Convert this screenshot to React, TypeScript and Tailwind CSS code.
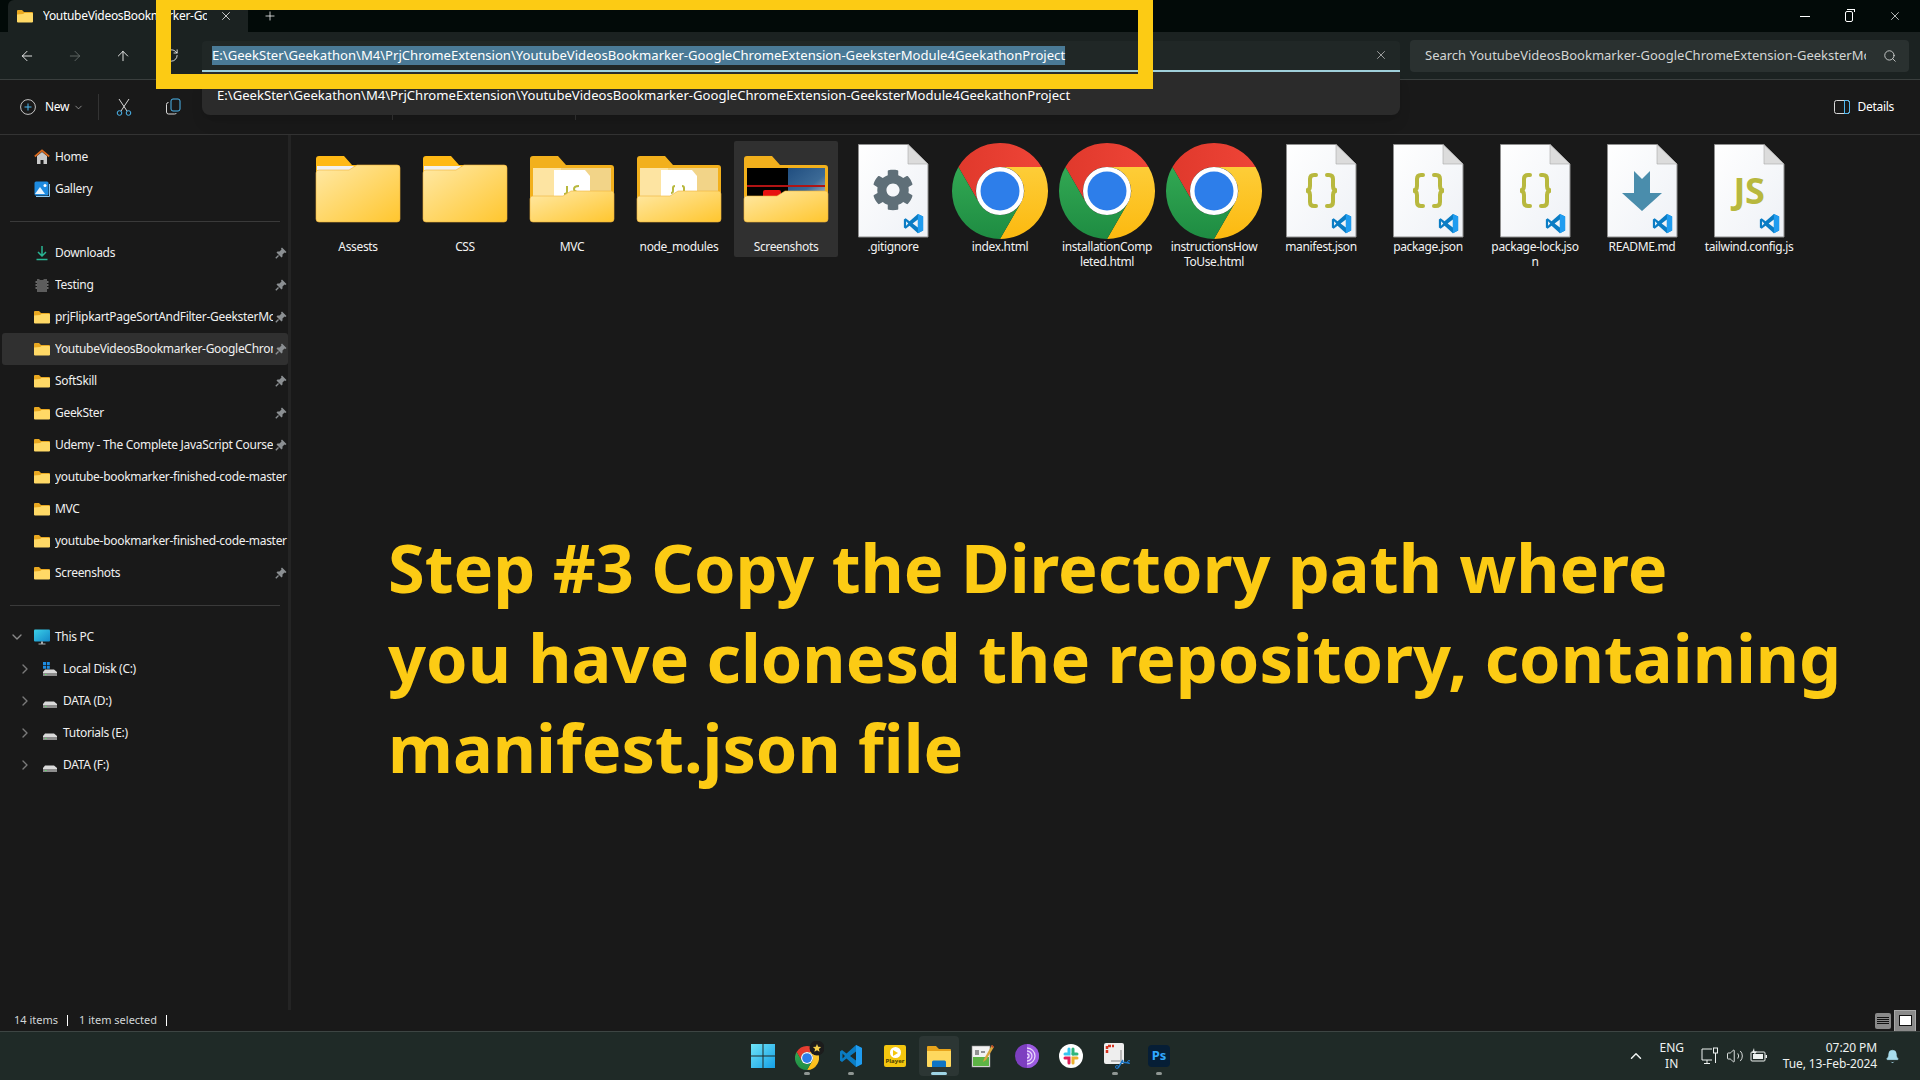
import React from "react";
import {
  ArrowLeft,
  ArrowRight,
  ArrowUp,
  Bell,
  ChevronDown,
  ChevronRight,
  ChevronUp,
  Plus,
  RotateCw,
  Search,
  Volume2,
  X,
} from "lucide-react";
import { FaCog } from "react-icons/fa";

const PATH =
  "E:\\GeekSter\\Geekathon\\M4\\PrjChromeExtension\\YoutubeVideosBookmarker-GoogleChromeExtension-GeeksterModule4GeekathonProject";

/* small icons */
function SmallFolder() {
  return (
    <svg width="16" height="14" viewBox="0 0 16 14" className="shrink-0">
      <path d="M0 2a1 1 0 0 1 1-1h4l2 2h8a1 1 0 0 1 1 1v8a1 1 0 0 1-1 1H1a1 1 0 0 1-1-1z" fill="#e9a820" />
      <path d="M0 5.500 6 5l1.500-1H15a1 1 0 0 1 1 1v7.500a1 1 0 0 1-1 1H1a1 1 0 0 1-1-1z" fill="#ffd966" />
    </svg>
  );
}

function Pin() {
  return (
    <svg width="12" height="12" viewBox="0 0 12 12" className="shrink-0">
      <path d="M7 0.500 11.500 5 10.500 6 9.500 5.500 7.500 7.500 7.500 9.500 6.500 10.500 1.500 5.500 2.500 4.500 4.500 4.500 6.500 2.500 6 1.500z" fill="#8b8f92" />
      <path d="M3.500 8.500 0.800 11.200" stroke="#8b8f92" strokeWidth="1.300" />
    </svg>
  );
}

function HomeIcon() {
  return (
    <svg width="16" height="16" viewBox="0 0 16 16" className="shrink-0">
      <path d="M3 7 8 3l5 4v8H9.500v-4h-3v4H3z" fill="#c9c9c9" />
      <path d="M0.800 7.500 8 1.300l7.200 6.200" fill="none" stroke="#d9691e" strokeWidth="1.700" />
    </svg>
  );
}

function GalleryIcon() {
  return (
    <svg width="16" height="16" viewBox="0 0 16 16" className="shrink-0">
      <rect x="0.500" y="0.500" width="14" height="14" rx="1.500" fill="#1e8be0" />
      <circle cx="11" cy="4.500" r="1.500" fill="#fff" />
      <path d="M1 13 6 6l5 7z" fill="#e8f4fc" />
      <path d="M2 15.500h13.500V3" fill="none" stroke="#8cc8f0" strokeWidth="1" />
    </svg>
  );
}

function DownloadIcon() {
  return (
    <svg width="16" height="16" viewBox="0 0 16 16" className="shrink-0">
      <path d="M8 1v9.500M4 7l4 4 4-4" fill="none" stroke="#2ab594" strokeWidth="1.500" />
      <path d="M2.500 14.500h11" stroke="#2ab594" strokeWidth="1.500" />
    </svg>
  );
}

function ChipIcon() {
  return (
    <svg width="16" height="16" viewBox="0 0 16 16" className="shrink-0">
      <path d="M3 2h2.500v1h4V2H13v13H3z" fill="#5d5d5d" />
      <path d="M1.500 5H3M1.500 8H3M1.500 11H3M13 5h1.500M13 8h1.500M13 11h1.500" stroke="#b9b9b9" strokeWidth="1.200" />
    </svg>
  );
}

function MonitorIcon() {
  return (
    <svg width="16" height="16" viewBox="0 0 16 16" className="shrink-0">
      <defs>
        <linearGradient id="pc" x1="0" y1="0" x2="1" y2="1">
          <stop offset="0" stopColor="#3bd0e8" />
          <stop offset="1" stopColor="#1488c8" />
        </linearGradient>
      </defs>
      <rect x="0" y="0.500" width="16" height="12" rx="1" fill="url(#pc)" />
      <path d="M7 12.500h2v2H7zM4.500 14.500h7v1h-7z" fill="#a8adb0" />
    </svg>
  );
}

function DiskIcon({ windows }: { windows?: boolean }) {
  return (
    <svg width="16" height="16" viewBox="0 0 16 16" className="shrink-0">
      {windows && <path d="M1 1h3v3H1zM4.800 1h3v3h-3zM1 4.800h3v3H1zM4.800 4.800h3v3h-3z" fill="#1e8be0" />}
      <path d="M3 8.500h9L15 11v1H1v-1z" fill="#d9d9d9" />
      <rect x="1" y="12" width="14" height="3" fill="#8d8d8d" />
      <rect x="3" y="13" width="1.500" height="1" fill="#5fe06a" />
    </svg>
  );
}

/* file list icons, all on a 96 box */
function VsBadge({ x, y, size }: { x: number; y: number; size: number }) {
  return (
    <svg x={x} y={y} width={size} height={size} viewBox="0 0 24 24">
      <path
        fillRule="evenodd"
        d="M17 1 23 4V20L17 23 7.500 14.500 3 18 1 16.500V7.500L3 6 7.500 9.500ZM17 7.500 11 12 17 16.500ZM3.500 9.500V14.500L6 12Z"
        fill="#0a7cc4"
      />
      <path fillRule="evenodd" d="M17 1 23 4V20L17 23V16.500 7.500Z" fill="#1f9cf0" />
    </svg>
  );
}

function ChromeShape() {
  return (
    <>
      <defs>
        <linearGradient id="cr" x1="0" y1="0" x2="1" y2="0">
          <stop offset="0" stopColor="#e0392c" />
          <stop offset="1" stopColor="#ee4437" />
        </linearGradient>
        <linearGradient id="cy" x1="0" y1="0" x2="0" y2="1">
          <stop offset="0" stopColor="#fdcd38" />
          <stop offset="1" stopColor="#fcb90f" />
        </linearGradient>
        <linearGradient id="cg" x1="0" y1="0" x2="0" y2="1">
          <stop offset="0" stopColor="#32a853" />
          <stop offset="1" stopColor="#1e8c42" />
        </linearGradient>
      </defs>
      <path d="M48 0A48 48 0 0 1 89.570 24H48A24 24 0 0 0 27.200 60L6.430 24A48 48 0 0 1 48 0Z" fill="url(#cr)" />
      <path d="M89.570 24A48 48 0 0 1 48 96L68.800 60A24 24 0 0 0 48 24Z" fill="url(#cy)" />
      <path d="M6.430 24A48 48 0 0 0 48 96L68.800 60A24 24 0 0 1 27.200 60Z" fill="url(#cg)" />
      <circle cx="48" cy="48" r="24" fill="#fff" />
      <circle cx="48" cy="48" r="19.500" fill="#2d7eea" />
    </>
  );
}

function ChromeIcon() {
  return (
    <svg width="96" height="96" viewBox="0 0 96 96">
      <ChromeShape />
    </svg>
  );
}

function Doc({ children }: { children?: React.ReactNode }) {
  return (
    <svg width="96" height="96" viewBox="0 0 96 96">
      <defs>
        <linearGradient id="pg" x1="0" y1="0" x2="1" y2="1">
          <stop offset="0" stopColor="#ffffff" />
          <stop offset="1" stopColor="#eef1f6" />
        </linearGradient>
      </defs>
      <path d="M13.500 1.500H63L83 21V94H13.500Z" fill="url(#pg)" stroke="#8f8f8f" strokeWidth="1" />
      <path d="M63 1.500V21H83Z" fill="#dcdcdc" stroke="#a8a8a8" strokeWidth="0.600" />
      {children}
      <VsBadge x={58} y={70} size={21} />
    </svg>
  );
}

function Braces() {
  return (
    <g fill="none" stroke="#b8b83e" strokeWidth="4" strokeLinecap="round">
      <path d="M43 32h-2q-4 0-4 4v7q0 4.500-4 4.500 4 0 4 4.500v7q0 4 4 4h2" />
      <path d="M54 32h2q4 0 4 4v7q0 4.500 4 4.500-4 0-4 4.500v7q0 4-4 4h-2" />
    </g>
  );
}

function Folder({ content }: { content?: "js" | "json" | "shots" }) {
  if (!content) {
    return (
      <svg width="96" height="96" viewBox="0 0 96 96" className="ml-[2px]">
        <defs>
          <linearGradient id="ff" x1="0" y1="0" x2="1" y2="1">
            <stop offset="0" stopColor="#ffe9a6" />
            <stop offset="1" stopColor="#ffc62e" />
          </linearGradient>
        </defs>
        <path d="M5 16a3 3 0 0 1 3-3h25l8 9h45a3 3 0 0 1 3 3v20H5z" fill="#ffb915" />
        <path d="M6 23H42L46 25 40 29H6z" fill="#f1f1f1" />
        <path d="M5 30a3 3 0 0 1 3-3H38L46 22H86a3 3 0 0 1 3 3V76a3 3 0 0 1-3 3H8a3 3 0 0 1-3-3Z" fill="url(#ff)" stroke="#eeb23a" strokeWidth="0.600" />
      </svg>
    );
  }
  return (
    <svg width="96" height="96" viewBox="0 0 96 96" className="ml-[2px]">
      <defs>
        <linearGradient id="ff2" x1="0" y1="0" x2="1" y2="1">
          <stop offset="0" stopColor="#ffe9a6" />
          <stop offset="1" stopColor="#ffc62e" />
        </linearGradient>
        <linearGradient id="sky" x1="0" y1="0" x2="1" y2="1">
          <stop offset="0" stopColor="#204e80" />
          <stop offset="0.600" stopColor="#3c6a96" />
          <stop offset="1" stopColor="#b0b4c0" />
        </linearGradient>
      </defs>
      <path d="M5 16a3 3 0 0 1 3-3h25l8 9h45a3 3 0 0 1 3 3v40H5z" fill="#f2b01c" />
      {content === "shots" ? (
        <>
          <rect x="8" y="25" width="41" height="30" fill="#000" />
          <rect x="49" y="25" width="37" height="30" fill="url(#sky)" />
          <rect x="8" y="42" width="78" height="2" fill="#b01414" />
          <rect x="24" y="47" width="18" height="10" rx="2" fill="#e81010" />
        </>
      ) : (
        <>
          <rect x="8" y="25" width="78" height="30" fill="#f2d488" />
          <rect x="8" y="25" width="28" height="30" fill="#fde4a2" />
          <path d="M29 27H60L65 33V56H29Z" fill="#fff" />
          {content === "js" ? (
            <path d="M42 43v6q0 2-3 2M54 43q-5 0-5 3t5 3-4 3" fill="none" stroke="#b8b83e" strokeWidth="2" />
          ) : (
            <path d="M43 43q-2 0-2 2v3q0 2-2 2M50 43q2 0 2 2v3q0 2 2 2" fill="none" stroke="#b8b83e" strokeWidth="2" />
          )}
        </>
      )}
      <path d="M5 56a3 3 0 0 1 3-3H38L46 48H86a3 3 0 0 1 3 3V76a3 3 0 0 1-3 3H8a3 3 0 0 1-3-3Z" fill="url(#ff2)" stroke="#eeb23a" strokeWidth="0.600" />
    </svg>
  );
}

const ITEMS: { name: string[]; icon: React.ReactNode; selected?: boolean }[] = [
  { name: ["Assests"], icon: <Folder /> },
  { name: ["CSS"], icon: <Folder /> },
  { name: ["MVC"], icon: <Folder content="js" /> },
  { name: ["node_modules"], icon: <Folder content="json" /> },
  { name: ["Screenshots"], icon: <Folder content="shots" />, selected: true },
  {
    name: [".gitignore"],
    icon: (
      <Doc>
        <foreignObject x="27" y="26" width="42" height="42">
          <FaCog className="w-[42px] h-[42px] text-[#5f6f78]" />
        </foreignObject>
      </Doc>
    ),
  },
  { name: ["index.html"], icon: <ChromeIcon /> },
  { name: ["installationComp", "leted.html"], icon: <ChromeIcon /> },
  { name: ["instructionsHow", "ToUse.html"], icon: <ChromeIcon /> },
  { name: ["manifest.json"], icon: <Doc><Braces /></Doc> },
  { name: ["package.json"], icon: <Doc><Braces /></Doc> },
  { name: ["package-lock.jso", "n"], icon: <Doc><Braces /></Doc> },
  {
    name: ["README.md"],
    icon: (
      <Doc>
        <path d="M40 28 48 36 56 28V50H68L48 68 28 50H40Z" fill="#4a8dac" />
      </Doc>
    ),
  },
  {
    name: ["tailwind.config.js"],
    icon: (
      <Doc>
        <text x="48" y="61" textAnchor="middle" fontSize="36" fontWeight="700" fill="#b8b83e" fontFamily="Open Sans, sans-serif">
          JS
        </text>
      </Doc>
    ),
  },
];

const QUICK: { label: string; icon: React.ReactNode; pinned?: boolean; active?: boolean }[] = [
  { label: "Downloads", icon: <DownloadIcon />, pinned: true },
  { label: "Testing", icon: <ChipIcon />, pinned: true },
  { label: "prjFlipkartPageSortAndFilter-GeeksterModule", icon: <SmallFolder />, pinned: true },
  { label: "YoutubeVideosBookmarker-GoogleChromeExtension", icon: <SmallFolder />, pinned: true, active: true },
  { label: "SoftSkill", icon: <SmallFolder />, pinned: true },
  { label: "GeekSter", icon: <SmallFolder />, pinned: true },
  { label: "Udemy - The Complete JavaScript Course", icon: <SmallFolder />, pinned: true },
  { label: "youtube-bookmarker-finished-code-master", icon: <SmallFolder /> },
  { label: "MVC", icon: <SmallFolder /> },
  { label: "youtube-bookmarker-finished-code-master", icon: <SmallFolder /> },
  { label: "Screenshots", icon: <SmallFolder />, pinned: true },
];

function NavRow({ label, icon, pinned, active }: { label: string; icon: React.ReactNode; pinned?: boolean; active?: boolean }) {
  return (
    <div className={`h-8 flex items-center pl-[32px] ml-[2px] rounded-[3px] ${active ? "bg-[#303030]" : ""}`}>
      <div className="w-[21px] shrink-0">{icon}</div>
      <span className={`overflow-hidden whitespace-nowrap ${pinned ? "w-[218px]" : "w-[233px]"}`}>{label}</span>
      {pinned && <div className="ml-[2px]"><Pin /></div>}
    </div>
  );
}

function DriveRow({ label, windows }: { label: string; windows?: boolean }) {
  return (
    <div className="h-8 flex items-center pl-[17px]">
      <ChevronRight size={16} strokeWidth={2} className="text-[#7a7a7a] mr-[9px] shrink-0" />
      <div className="w-[21px] shrink-0"><DiskIcon windows={windows} /></div>
      <span>{label}</span>
    </div>
  );
}

function Sidebar() {
  return (
    <aside className="w-[291px] shrink-0 border-r-[3px] border-[#242424] pt-[6px] text-[12px] tracking-[-0.3px] text-[#f0f0f0]">
      <NavRow label="Home" icon={<HomeIcon />} />
      <NavRow label="Gallery" icon={<GalleryIcon />} />
      <div className="h-px bg-[#3a3a3a] mt-4 mb-[15px] mx-[10px] w-[270px]" />
      {QUICK.map((q, i) => (
        <NavRow key={i} {...q} />
      ))}
      <div className="h-px bg-[#3a3a3a] mt-4 mb-[15px] mx-[10px] w-[270px]" />
      <div className="h-8 flex items-center pl-[9px]">
        <ChevronDown size={16} strokeWidth={2} className="text-[#8a8a8a] mr-[9px] shrink-0" />
        <div className="w-[21px] shrink-0"><MonitorIcon /></div>
        <span>This PC</span>
      </div>
      <DriveRow label="Local Disk (C:)" windows />
      <DriveRow label="DATA (D:)" />
      <DriveRow label="Tutorials (E:)" />
      <DriveRow label="DATA (F:)" />
    </aside>
  );
}

function FileGrid() {
  return (
    <main className="flex-1 pl-[15px] pt-[6px]">
      <div className="flex gap-[3px] text-[12px] leading-[15px] tracking-[-0.35px] text-[#f2f2f2]">
        {ITEMS.map((item) => (
          <div
            key={item.name.join("")}
            className={`w-[104px] h-[116px] flex flex-col items-center rounded-[2px] ${item.selected ? "bg-[#303030]" : ""}`}
          >
            <div className="h-[98px] pt-[2px] shrink-0">{item.icon}</div>
            {item.name.map((line) => (
              <div key={line} className="text-center whitespace-nowrap">{line}</div>
            ))}
          </div>
        ))}
      </div>
    </main>
  );
}

/* taskbar icons */
function TaskIcon({ children, running, active }: { children: React.ReactNode; running?: boolean; active?: boolean }) {
  return (
    <div className={`relative w-10 h-10 flex items-center justify-center rounded-[4px] ${active ? "bg-[#2c3634]" : ""}`}>
      {children}
      {running && <div className={`absolute bottom-[1px] left-1/2 -translate-x-1/2 h-[3px] rounded-full ${active ? "w-4 bg-[#9fd4e4]" : "w-[6px] bg-[#8f9693]"}`} />}
    </div>
  );
}

function TaskbarIcons() {
  return (
    <div className="flex items-center gap-[4px] pl-[2px]">
      <TaskIcon>
        <svg width="24" height="24" viewBox="0 0 24 24">
          <defs>
            <linearGradient id="win" x1="0" y1="0" x2="1" y2="1">
              <stop offset="0" stopColor="#6fe4f7" />
              <stop offset="1" stopColor="#149fe6" />
            </linearGradient>
          </defs>
          <path d="M0 0h11.500v11.500H0zM12.500 0H24v11.500H12.500zM0 12.500h11.500V24H0zM12.500 12.500H24V24H12.500z" fill="url(#win)" />
        </svg>
      </TaskIcon>
      <TaskIcon running>
        <svg width="30" height="30" viewBox="0 0 30 30" className="ml-[3px]">
          <svg x="1" y="5" width="24" height="24" viewBox="0 0 96 96">
            <ChromeShape />
          </svg>
          <circle cx="23" cy="7" r="7.500" fill="#1c1c1c" />
          <path d="M23 3l1.200 2.700 2.900.3-2.200 1.900.7 2.900-2.600-1.500-2.600 1.500.7-2.900-2.200-1.900 2.900-.3z" fill="#f5cf4a" />
        </svg>
      </TaskIcon>
      <TaskIcon running>
        <svg width="24" height="24" viewBox="0 0 24 24">
          <VsBadge x={0} y={0} size={24} />
        </svg>
      </TaskIcon>
      <TaskIcon>
        <div className="w-[22px] h-[22px] bg-[#f4c60f] rounded-[2px] flex flex-col items-center pt-[2px]">
          <div className="w-[11px] h-[11px] rounded-full bg-white flex items-center justify-center">
            <div className="w-0 h-0 border-y-[3px] border-y-transparent border-l-[5px] border-l-[#f4c60f]" />
          </div>
          <span className="text-[6px] leading-[7px] font-bold text-[#4a3c00]">Player</span>
        </div>
      </TaskIcon>
      <TaskIcon running active>
        <svg width="24" height="22" viewBox="0 0 24 22">
          <path d="M0 2a1 1 0 0 1 1-1h8l3 3h11a1 1 0 0 1 1 1v4H0z" fill="#e8a41c" />
          <path d="M0 6h24v15a1 1 0 0 1-1 1H1a1 1 0 0 1-1-1z" fill="#fed85e" />
          <path d="M5 17a1.500 1.500 0 0 1 1.500-1.500h11A1.500 1.500 0 0 1 19 17v5H5z" fill="#0f74c4" />
        </svg>
      </TaskIcon>
      <TaskIcon>
        <svg width="24" height="24" viewBox="0 0 24 24">
          <rect x="1" y="2" width="18" height="21" fill="#f2f2f2" stroke="#888" strokeWidth="0.600" />
          <rect x="2" y="13" width="16" height="9" fill="#5db345" />
          <path d="M5 6v5M7 6v5M10 8h4" stroke="#333" strokeWidth="1" />
          <path d="M21 1 13 15l-1 3 3-2L23 3z" fill="#d9a53c" />
          <path d="M21 1l2 2-1 1-2-2z" fill="#c2402b" />
        </svg>
      </TaskIcon>
      <TaskIcon>
        <svg width="24" height="24" viewBox="0 0 24 24">
          <circle cx="12" cy="12" r="12" fill="#7d3fc0" />
          <path d="M12 0a12 12 0 0 1 0 24z" fill="#9c5be0" />
          <g fill="none" stroke="#e8d6fa" strokeWidth="1.300">
            <path d="M12 4a8 8 0 0 1 0 16" />
            <path d="M12 7a5 5 0 0 1 0 10" />
            <path d="M12 10a2 2 0 0 1 0 4" />
          </g>
        </svg>
      </TaskIcon>
      <TaskIcon>
        <svg width="24" height="24" viewBox="0 0 24 24">
          <circle cx="12" cy="12" r="12" fill="#fff" />
          <g strokeWidth="3" strokeLinecap="round">
            <path d="M10 5v5H6" stroke="#36c5f0" fill="none" />
            <path d="M14 5v5" stroke="#2eb67d" />
            <path d="M14 10h4" stroke="#2eb67d" />
            <path d="M14 19v-5h4" stroke="#ecb22e" fill="none" />
            <path d="M10 19v-5H6" stroke="#e01e5a" fill="none" />
          </g>
        </svg>
      </TaskIcon>
      <TaskIcon running>
        <svg width="26" height="26" viewBox="0 0 26 26" className="ml-[3px]">
          <rect x="0" y="0" width="20" height="21" rx="2" fill="#eeeeee" />
          <path d="M3 10V3h7" fill="none" stroke="#d6331f" strokeWidth="2.500" strokeDasharray="3 1" />
          <path d="M17 7v11H7" fill="none" stroke="#b9b9b9" strokeWidth="2" />
          <path d="M14 25 19 17M25 20l-8-1" stroke="#1f78c8" strokeWidth="1.500" />
          <circle cx="13" cy="24" r="1.500" fill="none" stroke="#1f78c8" />
          <circle cx="25" cy="19" r="1.500" fill="none" stroke="#1f78c8" />
        </svg>
      </TaskIcon>
      <TaskIcon running>
        <div className="w-[22px] h-[22px] rounded-[4px] bg-[#061e36] flex items-center justify-center text-[#31a8ff] text-[13px] font-bold">Ps</div>
      </TaskIcon>
    </div>
  );
}

function Tray() {
  return (
    <div className="flex items-center justify-end text-[#eef2f1]">
      <ChevronUp size={18} strokeWidth={2} className="mr-[12px]" />
      <div className="text-[12px] leading-[16px] text-center w-[30px] mr-[14px]">
        <div>ENG</div>
        <div>IN</div>
      </div>
      <svg width="18" height="18" viewBox="0 0 18 18" fill="none" stroke="#eef2f1" strokeWidth="1" className="mr-[7px]">
        <path d="M11 13H1V2h10M6 13v3M3 16.500h6" />
        <rect x="12.500" y="1" width="4" height="5" />
        <path d="M14.500 6v10" />
      </svg>
      <Volume2 size={18} strokeWidth={1.200} className="mr-[6px]" />
      <svg width="18" height="18" viewBox="0 0 18 18" className="mr-[15px]">
        <rect x="1" y="5" width="14" height="9" rx="1" fill="none" stroke="#eef2f1" />
        <rect x="3" y="7" width="10" height="5" fill="#eef2f1" />
        <rect x="15.500" y="8" width="1.500" height="3" fill="#eef2f1" />
        <path d="M4 1 2 6h2.500l-1 3L7 4.500H4.500z" fill="#eef2f1" />
      </svg>
      <div className="text-[12px] tracking-[-0.1px] leading-[16px] text-right mr-[8px]">
        <div>07:20 PM</div>
        <div>Tue, 13-Feb-2024</div>
      </div>
      <Bell size={15} strokeWidth={1} fill="#a8dcec" className="text-[#a8dcec] mr-[20px]" />
    </div>
  );
}

export default function App() {
  return (
    <div className="relative w-screen h-screen overflow-hidden flex flex-col bg-[#191919] text-white font-['Noto_Sans',sans-serif]">
      {/* Title bar */}
      <div className="h-8 shrink-0 bg-[#020a08] flex items-end">
        <div className="ml-2 w-[240px] h-8 rounded-t-[6px] bg-[#1b2221] flex items-center pl-[9px]">
          <SmallFolder />
          <span className="ml-[10px] w-[164px] overflow-hidden whitespace-nowrap text-[12px] tracking-[-0.3px]">YoutubeVideosBookmarker-GoogleChrome</span>
          <X size={14} strokeWidth={1.300} className="ml-[12px]" />
        </div>
        <Plus size={14} strokeWidth={1.300} className="ml-[15px] mb-[9px]" />
        <div className="ml-auto h-full flex items-center pr-[18px] gap-[35px]">
          <div className="w-[10px] h-px bg-white" />
          <div className="relative w-[8px] h-[11px] border border-white rounded-[2px] after:absolute after:left-[1px] after:-top-[3px] after:w-[8px] after:h-[3px] after:border-t after:border-r after:border-white" />
          <X size={14} strokeWidth={1.200} />
        </div>
      </div>

      {/* Address row */}
      <div className="h-[48px] shrink-0 bg-[#1b2221] border-b border-[#3a3f3e] flex items-center pl-[3px] pr-[11px]">
        <div className="w-12 flex justify-center"><ArrowLeft size={16} strokeWidth={1.300} /></div>
        <div className="w-12 flex justify-center"><ArrowRight size={16} strokeWidth={1.300} className="text-[#6a706e]" /></div>
        <div className="w-12 flex justify-center"><ArrowUp size={16} strokeWidth={1.300} /></div>
        <div className="w-12 flex justify-center mr-[7px]"><RotateCw size={15} strokeWidth={1.300} /></div>
        <div className="w-[1198px] h-[31px] mt-[1px] bg-[#202726] rounded-t-[4px] border-b-2 border-[#9fcfda] flex items-center pl-[10px] pr-[12px] text-[13.1px]">
          <span className="bg-[#4a7a96] leading-[19px] whitespace-nowrap">{PATH}</span>
          <X size={14} strokeWidth={1.200} className="ml-auto text-[#d0d0d0]" />
        </div>
        <div className="ml-[10px] w-[499px] h-[32px] bg-[#2a3130] rounded-[4px] flex items-center pl-[15px] pr-[12px] text-[13px] text-[#d4d6d5]">
          <span className="w-[441px] overflow-hidden whitespace-nowrap">Search YoutubeVideosBookmarker-GoogleChromeExtension-GeeksterModule4GeekathonProject</span>
          <Search size={14} strokeWidth={1.500} className="ml-auto" />
        </div>
      </div>

      {/* Command bar */}
      <div className="h-[55px] shrink-0 border-b border-[#333] flex items-center pl-[20px] pr-[26px] text-[12px]">
        <svg width="16" height="16" viewBox="0 0 16 16" fill="none" className="shrink-0">
          <circle cx="8" cy="8" r="7.400" stroke="#d8d8d8" strokeWidth="0.900" />
          <path d="M8 4.500v7M4.500 8h7" stroke="#4cb8f0" strokeWidth="1" />
        </svg>
        <span className="ml-[9px] tracking-[-0.3px]">New</span>
        <ChevronDown size={11} strokeWidth={1.500} className="ml-[4px] text-[#bbb]" />
        <div className="ml-[14px] w-px h-[26px] bg-[#333]" />
        <svg width="16" height="18" viewBox="0 0 16 18" fill="none" className="ml-[17px] shrink-0">
          <path d="M3 1 11 13M13 1 5 13" stroke="#d8d8d8" strokeWidth="1" />
          <circle cx="3.500" cy="15" r="2.300" stroke="#4cb8f0" />
          <circle cx="12.500" cy="15" r="2.300" stroke="#4cb8f0" />
        </svg>
        <svg width="16" height="18" viewBox="0 0 16 18" fill="none" className="ml-[33px] shrink-0">
          <rect x="6" y="1" width="9" height="12" rx="2" stroke="#4cb8f0" />
          <path d="M3.500 4.500Q1.500 4.500 1.500 6.500V14Q1.500 16 3.500 16H9.500Q11 16 11.500 15" stroke="#d8d8d8" />
        </svg>
        <div className="ml-[211px] w-px h-[26px] bg-[#333]" />
        <div className="ml-[182px] w-px h-[26px] bg-[#333]" />
        <svg width="16" height="14" viewBox="0 0 16 14" fill="none" className="ml-auto shrink-0">
          <rect x="0.500" y="0.500" width="15" height="13" rx="2" stroke="#d8d8d8" />
          <path d="M10.500 0.500v13h3a2 2 0 0 0 2-2v-9a2 2 0 0 0-2-2z" stroke="#4cb8f0" />
        </svg>
        <span className="ml-[8px] tracking-[-0.3px]">Details</span>
      </div>

      {/* Body */}
      <div className="flex-1 flex min-h-0">
        <Sidebar />
        <FileGrid />
      </div>

      {/* Status bar */}
      <div className="h-[21px] shrink-0 flex items-center pl-[14px] pr-[4px] text-[11px] text-[#d2d6d8]">
        <span>14 items</span>
        <div className="ml-[9px] w-px h-[11px] bg-white" />
        <span className="ml-[11px]">1 item selected</span>
        <div className="ml-[9px] w-px h-[11px] bg-white" />
        <div className="ml-auto flex items-center gap-[3px]">
          <div className="w-4 h-4 bg-[#8a8a8a] rounded-[2px] flex flex-col justify-center gap-[1px] px-[2px]">
            <div className="h-px bg-[#111]" />
            <div className="h-px bg-[#111]" />
            <div className="h-px bg-[#111]" />
            <div className="h-px bg-[#111]" />
          </div>
          <div className="w-[22px] h-[22px] bg-[#8a8a8a] border border-[#aaa] flex items-center justify-center">
            <div className="w-[13px] h-[11px] bg-white border border-[#111]" />
          </div>
        </div>
      </div>

      {/* Taskbar */}
      <div className="h-[49px] shrink-0 bg-[#1f2a27] border-t border-[#3d4543] grid grid-cols-[1fr_auto_1fr] items-center">
        <div />
        <TaskbarIcons />
        <Tray />
      </div>

      {/* Dropdown under the address box */}
      <div className="absolute left-[202px] top-[72px] w-[1198px] h-[43px] bg-[#2b2b2b] rounded-b-[8px] pl-[15px] pt-[14px] text-[13.1px] leading-[18px] whitespace-nowrap shadow-lg">
        {PATH}
      </div>

      {/* Annotation over the window */}
      <div className="absolute left-[156px] -top-[5px] w-[997px] h-[94px] border-[15px] border-[#fccb14]" />
      <div className="absolute left-[388px] top-[523px] w-[1500px] text-[66.6px] leading-[90px] font-bold text-[#fccb14] font-['Noto_Sans',sans-serif]">
        <div>Step #3 Copy the Directory path where</div>
        <div>you have clonesd the repository, containing</div>
        <div>manifest.json file</div>
      </div>
    </div>
  );
}
